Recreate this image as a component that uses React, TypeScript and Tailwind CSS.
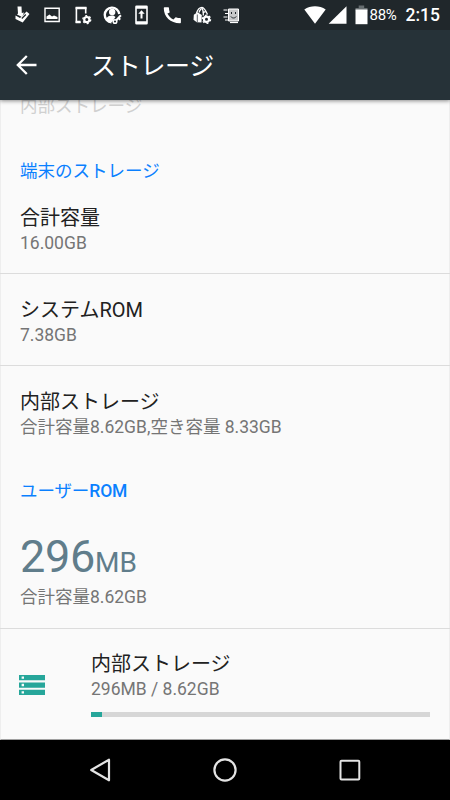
import React from 'react';

interface StorageRowProps {
  title: string;
  summary: string;
  divider?: boolean;
}

const USED_PERCENT = 3.2;

const NotificationIcons: React.FC = () => (
  <div className="flex items-center gap-[10px]">
    <svg className="h-5 w-5" viewBox="0 0 20 20" fill="currentColor">
      <path d="M5.500 1.500h4l.3 6.500 2.200-.5-2 4.500-5-2.500 1-1z" />
      <path d="M3.500 10.500l4.500 2.500 6.500-6.500L17.500 9l-6.800 8.500-7.200-3.500z" />
      <path d="M9.800 13.500l4-4" stroke="#20272b" strokeWidth="1.200" />
    </svg>
    <svg className="h-5 w-5" viewBox="0 0 20 20" fill="none" stroke="currentColor" strokeWidth="1.400">
      <path d="M3 3.200h14.200v13.300H3z" />
      <path d="M4.500 14v-2.500l3-2 2.500 2 2-1 3.500 1.500v2z" fill="currentColor" stroke="none" />
    </svg>
    <svg className="h-5 w-5" viewBox="0 0 20 20" fill="none" stroke="currentColor">
      <path d="M8.500 17.200H4.400V3h9.300v5.500" strokeWidth="1.600" />
      <path d="M3.600 3h10.900M3.600 17h5" strokeWidth="2.600" />
      <circle cx="14.800" cy="14.600" r="2.600" strokeWidth="2.200" />
      <circle cx="14.800" cy="14.600" r="4" strokeWidth="1.200" strokeDasharray="2 2.190" />
    </svg>
    <svg className="h-5 w-5" viewBox="0 0 20 20" fill="none" stroke="currentColor">
      <path d="M9.500 17.200a7.300 7.300 0 1 1 7.800-8.200" strokeWidth="2.400" />
      <circle cx="10.200" cy="7" r="3.200" fill="currentColor" stroke="none" />
      <path d="M4 14c1.500-3 4-4 7.500-3.500l2 1.500-3.500 5c-2.500.5-4.500-.5-6-3z" fill="currentColor" stroke="none" />
      <circle cx="13" cy="16.500" r="1.800" strokeWidth="1.500" />
      <path d="M14.300 15.200l4.600-5M16.500 13.200l1.800 1.400" strokeWidth="2" />
    </svg>
    <svg className="h-5 w-5" viewBox="0 0 20 20">
      <path fill="currentColor" fillRule="evenodd" d="M4.500.5h10a1.300 1.300 0 0 1 1.300 1.300v16.400a1.300 1.300 0 0 1-1.300 1.300h-10a1.300 1.300 0 0 1-1.300-1.300V1.800A1.300 1.300 0 0 1 4.500.5zM4.800 3.700v12.600h9.400V3.700z" />
      <path fill="currentColor" d="M9.500 5.200l3.200 3.500h-2.200v4.800h-2V8.700H6.300z" />
    </svg>
    <svg className="h-5 w-5" viewBox="0 0 20 20" fill="currentColor">
      <path d="M5.400 8.600c1.300 2.600 3.400 4.700 6 6l2-2c.3-.3.7-.4 1-.2 1.100.4 2.300.6 3.500.6.6 0 1 .4 1 1v3.200c0 .6-.4 1-1 1C8.400 18.200 1.800 11.600 1.800 3.200c0-.6.4-1 1-1H6c.6 0 1 .4 1 1 0 1.300.2 2.500.6 3.500.1.400 0 .8-.2 1z" />
    </svg>
    <svg className="h-5 w-5" viewBox="0 0 20 20" fill="none" stroke="currentColor">
      <path d="M4.500 8C6 3.500 8.500 2.300 10 2.300c2 0 4 3.700 5.500 7.200M7 7.500c1-3 2.500-4.500 3.500-3.500l1 4" strokeWidth="1.300" />
      <path d="M1.800 9.700l3.700-2.500 4.300 2.800-.3 7.500-4.700-.3-3.300-2.500z" fill="currentColor" stroke="none" />
      <path d="M5.300 9.500v7.500" stroke="#20272b" strokeWidth=".7" />
      <path d="M11.300 10.500V7.300l2.400-.6" strokeWidth="1.300" />
      <circle cx="14.500" cy="14.300" r="2.600" strokeWidth="2.200" />
      <circle cx="14.500" cy="14.300" r="4.100" strokeWidth="1.200" strokeDasharray="2 2.290" />
    </svg>
    <svg className="h-5 w-5" viewBox="0 0 20 20" fill="none" stroke="currentColor">
      <path d="M6.500 4h10v12h-10z" fill="currentColor" fillOpacity=".75" strokeWidth="1" />
      <path d="M8 17.500h8" strokeWidth="1.200" />
      <path d="M1.500 5h4M3 8.500h3M1.500 12h4M3 15h3" strokeWidth="1" />
      <path d="M9.500 7v2M13.500 7v2M8.800 11.500c1.500 2 4 2 5.500 0" stroke="#20272b" strokeWidth="1" />
    </svg>
  </div>
);

const StatusBar: React.FC = () => (
  <div className="flex h-[30px] items-center justify-between bg-[#20272b] pr-[10px] pl-3 text-white">
    <NotificationIcons />
    <div className="flex items-center">
      <svg className="h-[18px] w-[22px]" viewBox="0 0 22 18" fill="currentColor">
        <path d="M11 17.700L.3 3.500C6.500-.7 15.500-.7 21.700 3.500z" />
      </svg>
      <svg className="ml-[2px] h-[18px] w-[19px]" viewBox="0 0 19 18" fill="currentColor">
        <path d="M18.500.3v17.400H.7z" />
      </svg>
      <svg className="ml-[8px] h-5 w-[13px]" viewBox="0 0 13 20" fill="currentColor">
        <path d="M3.700.5h5.500V3h3.300v2.500H.5V3h3.200z" fill="#666d70" />
        <path d="M.5 4.500h12v14.700H.5z" />
      </svg>
      <span className="ml-[2px] w-[27px] pt-px text-[15px] tracking-[-0.3px] whitespace-nowrap">88%</span>
      <span className="ml-[9px] pt-px text-[17.5px] font-medium">2:15</span>
    </div>
  </div>
);

const Toolbar: React.FC = () => (
  <header className="flex h-[70px] items-center bg-[#263238] pl-[15px] text-white">
    <svg className="h-6 w-6" viewBox="0 0 24 24" fill="none" stroke="currentColor" strokeWidth="2.300">
      <path d="M21.500 12H3M11.800 3L2.800 12l9 9" />
    </svg>
    <h1 className="ml-[52px] pt-[3px] text-[25px] leading-[30px] tracking-[-0.3px]">ストレージ</h1>
  </header>
);

const StorageRow: React.FC<StorageRowProps> = ({ title, summary, divider }) => (
  <div className={`h-[92px] px-5 pt-[23px] ${divider ? 'border-b border-[#dcdcdc]' : ''}`}>
    <p className="text-[20px] leading-[26px] text-[#212121]">{title}</p>
    <p className="text-[17.5px] leading-[25px] text-[#757575]">{summary}</p>
  </div>
);

const NavigationBar: React.FC = () => (
  <nav className="flex h-[60px] items-center justify-around bg-black px-[38px] text-[#e4e4e4]">
    <svg className="h-[26px] w-[26px]" viewBox="0 0 26 26" fill="none" stroke="currentColor" strokeWidth="2.200" strokeLinejoin="round">
      <path d="M22 2.700v20.600L4.200 13z" />
    </svg>
    <svg className="h-[26px] w-[26px]" viewBox="0 0 26 26" fill="none" stroke="currentColor" strokeWidth="2.200">
      <circle cx="13" cy="13" r="10.600" />
    </svg>
    <svg className="h-[26px] w-[26px]" viewBox="0 0 26 26" fill="none" stroke="currentColor" strokeWidth="2">
      <rect x="3.500" y="3.700" width="18.800" height="18.800" rx="1" />
    </svg>
  </nav>
);

const App: React.FC = () => {
  return (
    <div className="flex h-[800px] w-[450px] flex-col overflow-hidden bg-[#fafafa] font-[Roboto,'Noto_Sans_CJK_JP',sans-serif]">
      <div className="z-10 shadow-[0_1px_4px_rgba(0,0,0,0.45)]">
        <StatusBar />
        <Toolbar />
      </div>

      <main className="h-[640px] border-x border-b border-x-[#eeeeee] border-b-[#a0a0a0]">
        <div className="-mx-px">
          {/* Summary of the item scrolled under the toolbar */}
          <p className="-mt-[7px] h-[32px] px-5 text-[17.5px] leading-[26px] text-[#d0d0d0]">内部ストレージ</p>

          <h2 className="h-[57px] px-5 pt-[33px] text-[17.5px] leading-[26px] font-medium text-[#0a80ff]">
            <span className="font-normal">端末のストレージ</span>
          </h2>
          <StorageRow title="合計容量" summary="16.00GB" divider />
          <StorageRow title="システムROM" summary="7.38GB" divider />
          <StorageRow title="内部ストレージ" summary="合計容量8.62GB,空き容量 8.33GB" />

          <h2 className="h-[58px] px-5 pt-[20px] text-[17.5px] leading-[26px] font-medium tracking-[-0.1px] text-[#0a80ff]">
            <span className="font-normal">ユーザー</span>ROM
          </h2>
          <div className="h-[113px] border-b border-[#dcdcdc] px-5 pt-[15px]">
            <p className="text-[45px] leading-[52px] tracking-[-0.3px] text-[#607d8b]">
              296<span className="text-[28px] tracking-normal">MB</span>
            </p>
            <p className="-mt-[5px] text-[17.5px] leading-[26px] text-[#757575]">合計容量8.62GB</p>
          </div>

          <div className="flex px-5 pt-[22px]">
            <svg className="mt-[24px] -ml-px h-[20px] w-[26px] shrink-0 text-[#26a69a]" viewBox="0 0 26 20" fill="currentColor">
              <path fillRule="evenodd" d="M0 0h26v5.300H0zM2.600 1.400v2.400H5V1.400zM0 7.400h26v5.300H0zM2.600 8.800v2.400H5V8.800zM0 14.800h26v5.200H0zM2.600 16.200v2.400H5v-2.400z" />
            </svg>
            <div className="ml-[46px] grow">
              <p className="text-[20px] leading-[26px] text-[#212121]">内部ストレージ</p>
              <p className="text-[17.5px] leading-[25px] text-[#757575]">296MB / 8.62GB</p>
              <div className="mt-[10px] h-[5px] bg-[#d6d6d6]">
                <div className="h-full bg-[#26a69a]" style={{ width: `${USED_PERCENT}%` }} />
              </div>
            </div>
          </div>
        </div>
      </main>

      <NavigationBar />
    </div>
  );
};

export default App;
